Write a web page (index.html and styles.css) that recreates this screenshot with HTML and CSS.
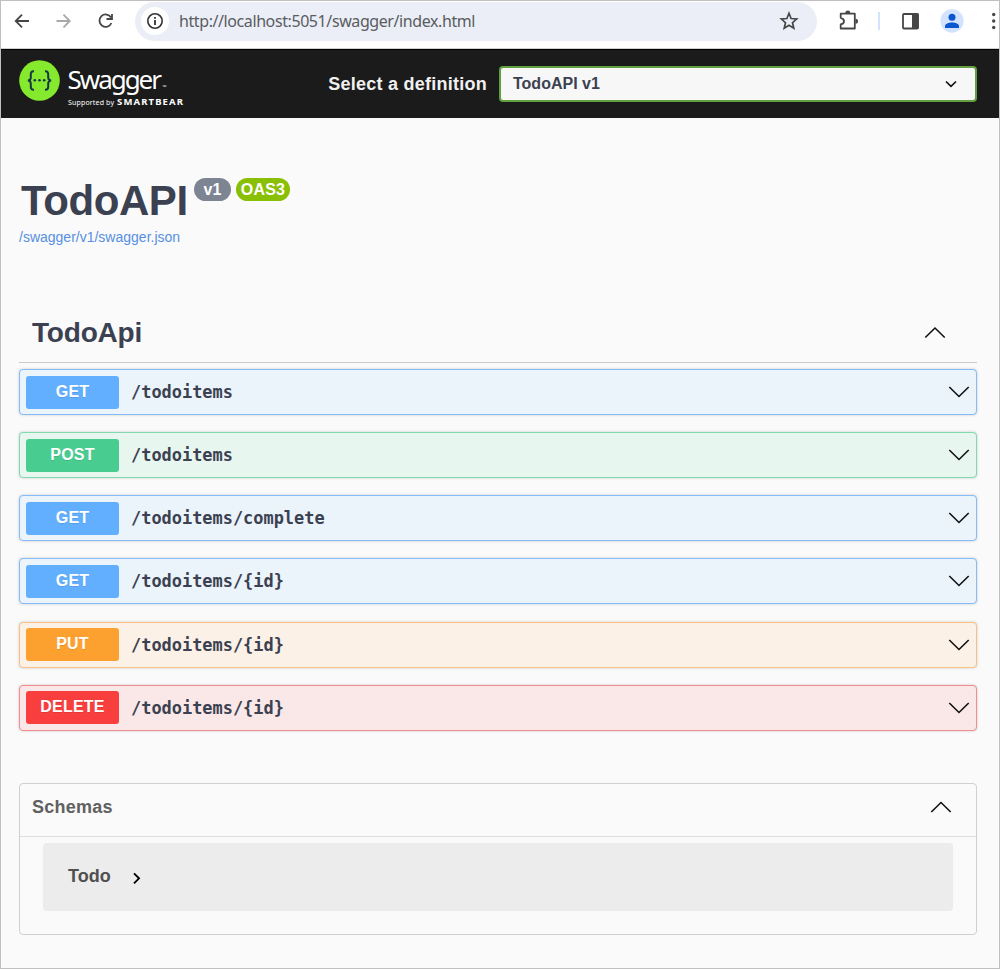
FILE: index.html
```html
<!DOCTYPE html>
<html lang="en">
<head>
<meta charset="utf-8">
<title>Swagger UI</title>
<link rel="stylesheet" href="styles.css">
</head>
<body>
<div class="window">
  <div class="browser">
    <svg class="nav" width="134" height="47" viewBox="1 1 134 47" fill="none" stroke-width="1.8">
      <path d="M29 21H16M22 14.7L15.7 21L22 27.3" stroke="#454746"/>
      <path d="M56.500 21H69.500M63.500 14.700L69.800 21L63.500 27.300" stroke="#a9a9a9"/>
      <path d="M111 17.500A6.200 6.200 0 1 0 111.400 23M112 14V19H106.500" stroke="#454746"/>
    </svg>
    <div class="address">
      <span class="info"><svg width="18" height="18" viewBox="0 0 18 18"><circle cx="9" cy="9" r="7.200" fill="none" stroke="#333" stroke-width="1.600"/><path d="M9 8V13M9 5V6.800" stroke="#333" stroke-width="1.800"/></svg></span>
      <span class="url">http://localhost:5051/swagger/index.html</span>
      <svg class="star" width="20" height="20" viewBox="0 0 20 20"><path d="M10 2.300L12.100 7.500L17.700 8L13.500 11.700L14.800 17.300L10 14.300L5.200 17.300L6.500 11.700L2.300 8L7.900 7.500Z" fill="none" stroke="#454746" stroke-width="1.700"/></svg>
    </div>
    <svg class="tools" width="182" height="47" viewBox="817 1 182 47">
      <path d="M840.700 13.700H854.800V28.500H840.700V24.500Q844 23.800 844 21.200Q844 18.600 840.700 17.800Z" fill="none" stroke="#454746" stroke-width="1.800" stroke-linejoin="round"/>
      <path d="M845.300 13A2.500 2.500 0 0 1 850.300 13ZM855.500 18.700A2.500 2.500 0 0 1 855.500 23.700Z" fill="#454746"/>
      <rect x="878" y="12" width="2" height="18" fill="#d3e3fd"/>
      <rect x="903" y="14" width="15" height="14.500" rx="1" fill="none" stroke="#454746" stroke-width="1.800"/>
      <path d="M912 13.500H918.500V29H912Z" fill="#454746"/>
      <circle cx="952" cy="21" r="11.700" fill="#d3e3fd"/>
      <circle cx="952" cy="17.300" r="3.500" fill="#0b57d0"/>
      <path d="M945 28V26C945 21.300 959 21.300 959 26V28Z" fill="#0b57d0"/>
      <g fill="#454746"><circle cx="993.700" cy="14.500" r="1.700"/><circle cx="993.700" cy="21" r="1.700"/><circle cx="993.700" cy="27.500" r="1.700"/></g>
    </svg>
  </div>
  <header class="topbar">
    <svg class="logo" width="170" height="52" viewBox="18 58 170 52">
      <circle cx="39.500" cy="80.500" r="20.300" fill="#85ea2d"/>
      <path d="M34 71.300Q30.600 71 30.800 74.500V77.200Q30.800 80.500 27.800 80.500Q30.800 80.500 30.800 83.800V86.500Q30.600 90 34 89.700M45 71.300Q48.400 71 48.200 74.500V77.200Q48.200 80.500 51.200 80.500Q48.200 80.500 48.200 83.800V86.500Q48.400 90 45 89.700" fill="none" stroke="#173647" stroke-width="2"/>
      <g fill="#173647"><circle cx="34.800" cy="80.300" r="1.300"/><circle cx="39.500" cy="80.300" r="1.300"/><circle cx="44.200" cy="80.300" r="1.300"/></g>
      <text class="brand" x="67.500" y="88.500" textLength="94.500">Swagger</text>
      <text class="support" x="68" y="105" textLength="46">Supported by</text>
      <text class="bear" x="117" y="105" textLength="66">SMARTBEAR</text>
      <text class="trade" x="162.500" y="89">™</text>
    </svg>
    <span class="select-label">Select a definition</span>
    <div class="select"><span>TodoAPI v1</span><svg width="14" height="10" viewBox="0 0 14 10"><path d="M2 2.500L7 7.300L12 2.500" fill="none" stroke="#111" stroke-width="1.700"/></svg></div>
  </header>
  <main class="content">
    <div class="heading"><h1>TodoAPI</h1><span class="badge version">v1</span><span class="badge oas">OAS3</span></div>
    <a class="spec">/swagger/v1/swagger.json</a>
    <div class="tag"><h2>TodoApi</h2><svg class="arrow" width="22" height="14" viewBox="0 0 22 14"><path d="M1.300 11.500L11 2L20.700 11.500"/></svg></div>
    <div class="operations">
      <div class="op get"><span class="method">GET</span><span class="path">/todoitems</span><svg class="arrow" width="22" height="14" viewBox="0 0 22 14"><path d="M1.300 2L11 11.500L20.700 2"/></svg></div>
      <div class="op post"><span class="method">POST</span><span class="path">/todoitems</span><svg class="arrow" width="22" height="14" viewBox="0 0 22 14"><path d="M1.300 2L11 11.500L20.700 2"/></svg></div>
      <div class="op get"><span class="method">GET</span><span class="path">/todoitems/complete</span><svg class="arrow" width="22" height="14" viewBox="0 0 22 14"><path d="M1.300 2L11 11.500L20.700 2"/></svg></div>
      <div class="op get"><span class="method">GET</span><span class="path">/todoitems/{id}</span><svg class="arrow" width="22" height="14" viewBox="0 0 22 14"><path d="M1.300 2L11 11.500L20.700 2"/></svg></div>
      <div class="op put"><span class="method">PUT</span><span class="path">/todoitems/{id}</span><svg class="arrow" width="22" height="14" viewBox="0 0 22 14"><path d="M1.300 2L11 11.500L20.700 2"/></svg></div>
      <div class="op delete"><span class="method">DELETE</span><span class="path">/todoitems/{id}</span><svg class="arrow" width="22" height="14" viewBox="0 0 22 14"><path d="M1.300 2L11 11.500L20.700 2"/></svg></div>
    </div>
    <section class="schemas">
      <div class="schemas-head"><h3>Schemas</h3><svg class="arrow" width="22" height="14" viewBox="0 0 22 14"><path d="M1.300 12L11 2.500L20.700 12"/></svg></div>
      <div class="model"><span>Todo</span><svg width="10" height="14" viewBox="0 0 10 14"><path d="M2 2.300L7 7.300L2 12.300" fill="none" stroke="#000" stroke-width="1.900"/></svg></div>
    </section>
  </main>
</div>
</body>
</html>
```
FILE: styles.css
```css
* { box-sizing: border-box; }
body { margin: 0; font-family: "Liberation Sans", Arial, sans-serif; color: #3b4151; }
h1, h2, h3 { margin: 0; }
svg { display: block; flex: none; }
.window { width: 1000px; height: 969px; border: 1px solid #c0c0c0; background: #fafafa; overflow: hidden; }
.browser { display: flex; height: 48px; background: #fff; border-bottom: 1px solid #d0d0d0; }
.address { display: flex; align-items: center; width: 682px; height: 39px; margin-top: 1px; padding: 0 18px 1px 6px; border-radius: 20px; background: #ebeef7; }
.info { display: grid; place-items: center; width: 28px; height: 28px; border-radius: 50%; background: #fff; }
.url { flex: 1; margin-left: 10px; font: 16px "Noto Sans", sans-serif; letter-spacing: -0.41px; color: #5a5c60; white-space: nowrap; }
.topbar { display: flex; align-items: center; height: 69px; padding: 0 22px 0 17px; background: #1b1b1b; border-top: 1px solid #000; }
.brand { font: 26px "Noto Sans", sans-serif; fill: #fff; }
.support { font: 7px "Noto Sans", sans-serif; fill: #fff; }
.bear { font: bold 9.5px "Noto Sans", sans-serif; fill: #fff; }
.trade { font: 5px "Noto Sans", sans-serif; fill: #fff; }
.select-label { margin-left: auto; margin-right: 12px; font-size: 18px; font-weight: bold; letter-spacing: 0.25px; color: #f0f0f0; }
.select { display: flex; align-items: center; justify-content: space-between; width: 478px; height: 36px; padding: 0 17px 0 12px; border: 2px solid #62a03f; border-radius: 4px; background: #f7f7f7; font-size: 16px; font-weight: bold; }
.content { padding: 59px 22px 0 18px; }
.heading { display: flex; align-items: flex-start; height: 50px; padding-left: 2px; }
h1 { width: 173px; font-size: 42px; line-height: 48px; letter-spacing: -0.4px; }
.badge { display: grid; place-items: center; height: 23px; margin-top: 1px; border-radius: 12px; color: #fff; font-size: 16px; font-weight: bold; }
.version { width: 37px; background: #7d8492; }
.oas { width: 54px; margin-left: 5px; background: #89bf04; letter-spacing: 0.2px; }
.spec { display: block; height: 19px; padding-top: 2px; font-size: 14px; line-height: 16px; color: #568fe2; }
.tag { display: flex; align-items: center; justify-content: space-between; height: 59px; margin-top: 58px; padding: 0 31px 0 13px; border-bottom: 1px solid #c9cacc; }
h2 { font-size: 28px; line-height: 32px; letter-spacing: -0.2px; }
.arrow { fill: none; stroke: #111; stroke-width: 1.6; }
.operations { display: grid; gap: 17.17px; margin-top: 6px; }
.op { display: flex; align-items: center; height: 46px; padding: 0 6px; border: 1px solid; border-radius: 4px; box-shadow: 0 0 3px rgba(0, 0, 0, .19); }
.method { width: 93px; height: 33px; border-radius: 3px; color: #fff; font-size: 16px; font-weight: bold; letter-spacing: 0.2px; line-height: 32px; text-align: center; text-shadow: 0 1px 0 rgba(0, 0, 0, .1); }
.path { flex: 1; margin-left: 12px; font: bold 16.93px "DejaVu Sans Mono", monospace; }
.get { border-color: #85bbf9; background: #ebf3fb; }
.get .method { background: #61affe; }
.post { border-color: #82d9af; background: #e8f6f0; }
.post .method { background: #49cc90; }
.put { border-color: #fac184; background: #fbf1e6; }
.put .method { background: #fca130; }
.delete { border-color: #f58b8d; background: #fae7e7; }
.delete .method { background: #f93e3e; }
.schemas { height: 152px; margin-top: 52.15px; border: 1px solid #cfd0d4; border-radius: 4px; }
.schemas-head { display: flex; align-items: center; justify-content: space-between; height: 53px; padding: 0 24px 5px 12px; border-bottom: 1px solid #dcdde0; color: #606060; }
h3 { font-size: 18px; letter-spacing: 0.25px; }
.model { display: flex; align-items: center; height: 68px; margin: 6px 23px 0; padding-left: 25px; border-radius: 4px; background: #ececec; color: #505050; font-size: 18px; font-weight: bold; }
.model svg { margin: 2px 0 0 21px; }
```
